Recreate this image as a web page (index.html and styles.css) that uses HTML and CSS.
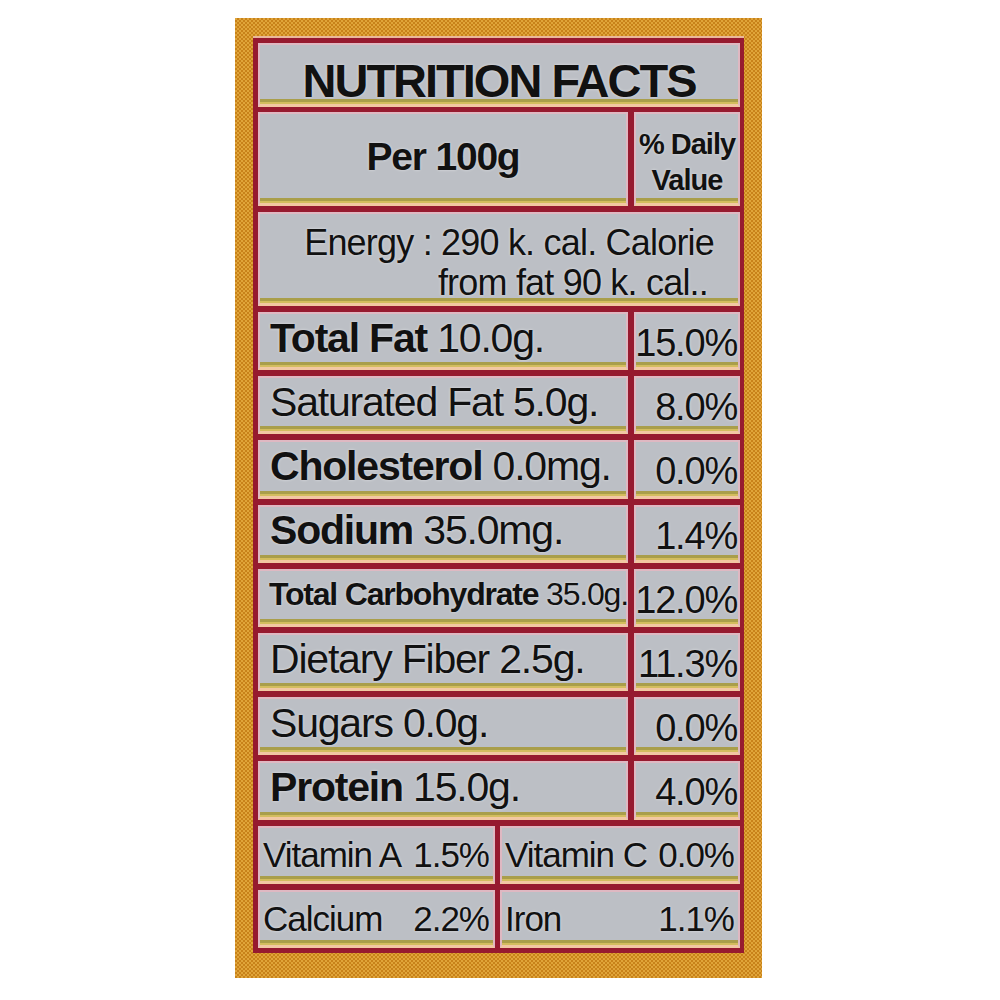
FILE: index.html
```html
<!DOCTYPE html>
<html lang="en">
<head>
    <meta charset="UTF-8">
    <title>Nutrition Facts</title>
    <link rel="stylesheet" href="styles.css">
</head>
<body>
<div class="label">
    <div class="panel">
        <div class="row title-row">
            <div class="cell title">NUTRITION FACTS</div>
        </div>
        <div class="row split head-row">
            <div class="cell per">Per 100g</div>
            <div class="cell daily">% Daily<br>Value</div>
        </div>
        <div class="row energy-row">
            <div class="cell energy">
                <span>Energy : 290 k. cal. Calorie</span>
                <span class="second">from fat 90 k. cal..</span>
            </div>
        </div>

        <div class="row split">
            <div class="cell item"><b>Total Fat</b>&nbsp;10.0g.</div>
            <div class="cell pct">15.0%</div>
        </div>
        <div class="row split">
            <div class="cell item">Saturated Fat 5.0g.</div>
            <div class="cell pct">8.0%</div>
        </div>
        <div class="row split">
            <div class="cell item"><b>Cholesterol</b>&nbsp;0.0mg.</div>
            <div class="cell pct">0.0%</div>
        </div>
        <div class="row split">
            <div class="cell item"><b>Sodium</b>&nbsp;35.0mg.</div>
            <div class="cell pct">1.4%</div>
        </div>
        <div class="row split">
            <div class="cell item small"><b>Total Carbohydrate</b>&nbsp;35.0g.</div>
            <div class="cell pct">12.0%</div>
        </div>
        <div class="row split">
            <div class="cell item">Dietary Fiber 2.5g.</div>
            <div class="cell pct">11.3%</div>
        </div>
        <div class="row split">
            <div class="cell item">Sugars 0.0g.</div>
            <div class="cell pct">0.0%</div>
        </div>
        <div class="row split">
            <div class="cell item"><b>Protein</b>&nbsp;15.0g.</div>
            <div class="cell pct">4.0%</div>
        </div>

        <div class="row minerals">
            <div class="cell mini"><span>Vitamin A</span><span>1.5%</span></div>
            <div class="cell mini"><span>Vitamin C</span><span>0.0%</span></div>
        </div>
        <div class="row minerals">
            <div class="cell mini"><span>Calcium</span><span>2.2%</span></div>
            <div class="cell mini"><span>Iron</span><span>1.1%</span></div>
        </div>
    </div>
</div>
</body>
</html>
```

FILE: styles.css
```css
body {
    margin: 0;
    background-color: #ffffff;
    font-family: "Liberation Sans", Arial, sans-serif;
    color: #111111;
}
.label {
    width: 527px;
    box-sizing: border-box;
    margin: 18px 0 0 235px;
    padding: 20px 18px 25px 18px;
    background-color: #d3921f;
    background-image: repeating-conic-gradient(#c8821a 0 25%, #e0a53a 0 50%);
    background-size: 4px 4px;
}
.panel {
    background-color: #961a2f;
    padding: 5px 4px 5px 5px;
    display: flex;
    flex-direction: column;
    gap: 6px;
    box-shadow: 0 -2px 0 #eab79a;
}
.row {
    display: grid;
    grid-template-columns: minmax(0, 1fr);
    height: 58.2px;
}
.row.split {
    grid-template-columns: minmax(0, 1fr) 106px;
    gap: 6px;
}
.row.minerals {
    grid-template-columns: 237px minmax(0, 1fr);
    gap: 5px;
}
.title-row {
    height: 63px;
}
.head-row,
.energy-row {
    height: 94px;
}
.cell {
    box-sizing: border-box;
    min-width: 0;
    background-color: #bcbfc5;
    border: 2px solid #dfb8c2;
    border-bottom: 3px solid #f2c7a2;
    box-shadow: inset 0 -2px 0 #d3bd5e, inset 0 -5px 0 #a99e4a;
    display: flex;
    align-items: center;
    padding: 0 0 5px 10px;
    text-shadow: 0 0 3px rgba(255, 255, 255, 0.55);
    white-space: nowrap;
}
.title {
    justify-content: center;
    align-items: flex-start;
    padding: 12px 0 0 0;
    font-size: 47px;
    line-height: 1;
    font-weight: bold;
    letter-spacing: -2px;
}
.per {
    justify-content: center;
    padding: 0 0 4px 0;
    font-size: 39px;
    font-weight: bold;
    letter-spacing: -1.2px;
}
.daily {
    justify-content: center;
    text-align: center;
    padding: 6px 0 0 0;
    font-size: 29px;
    line-height: 36px;
    font-weight: bold;
    letter-spacing: -1px;
}
.energy {
    flex-direction: column;
    align-items: flex-end;
    justify-content: flex-start;
    padding: 9px 24px 0 0;
    font-size: 36px;
    line-height: 40px;
    letter-spacing: -0.8px;
}
.energy .second {
    margin-right: 6px;
}
.item {
    font-size: 41px;
    letter-spacing: -1.2px;
}
.item.small {
    font-size: 32px;
    padding-left: 9px;
}
.pct {
    justify-content: flex-end;
    padding: 6px 1px 0 0;
    font-size: 38px;
    letter-spacing: -1.2px;
}
.mini {
    justify-content: space-between;
    padding: 2px 4px 1px 3px;
    font-size: 35px;
    letter-spacing: -1px;
}
```
